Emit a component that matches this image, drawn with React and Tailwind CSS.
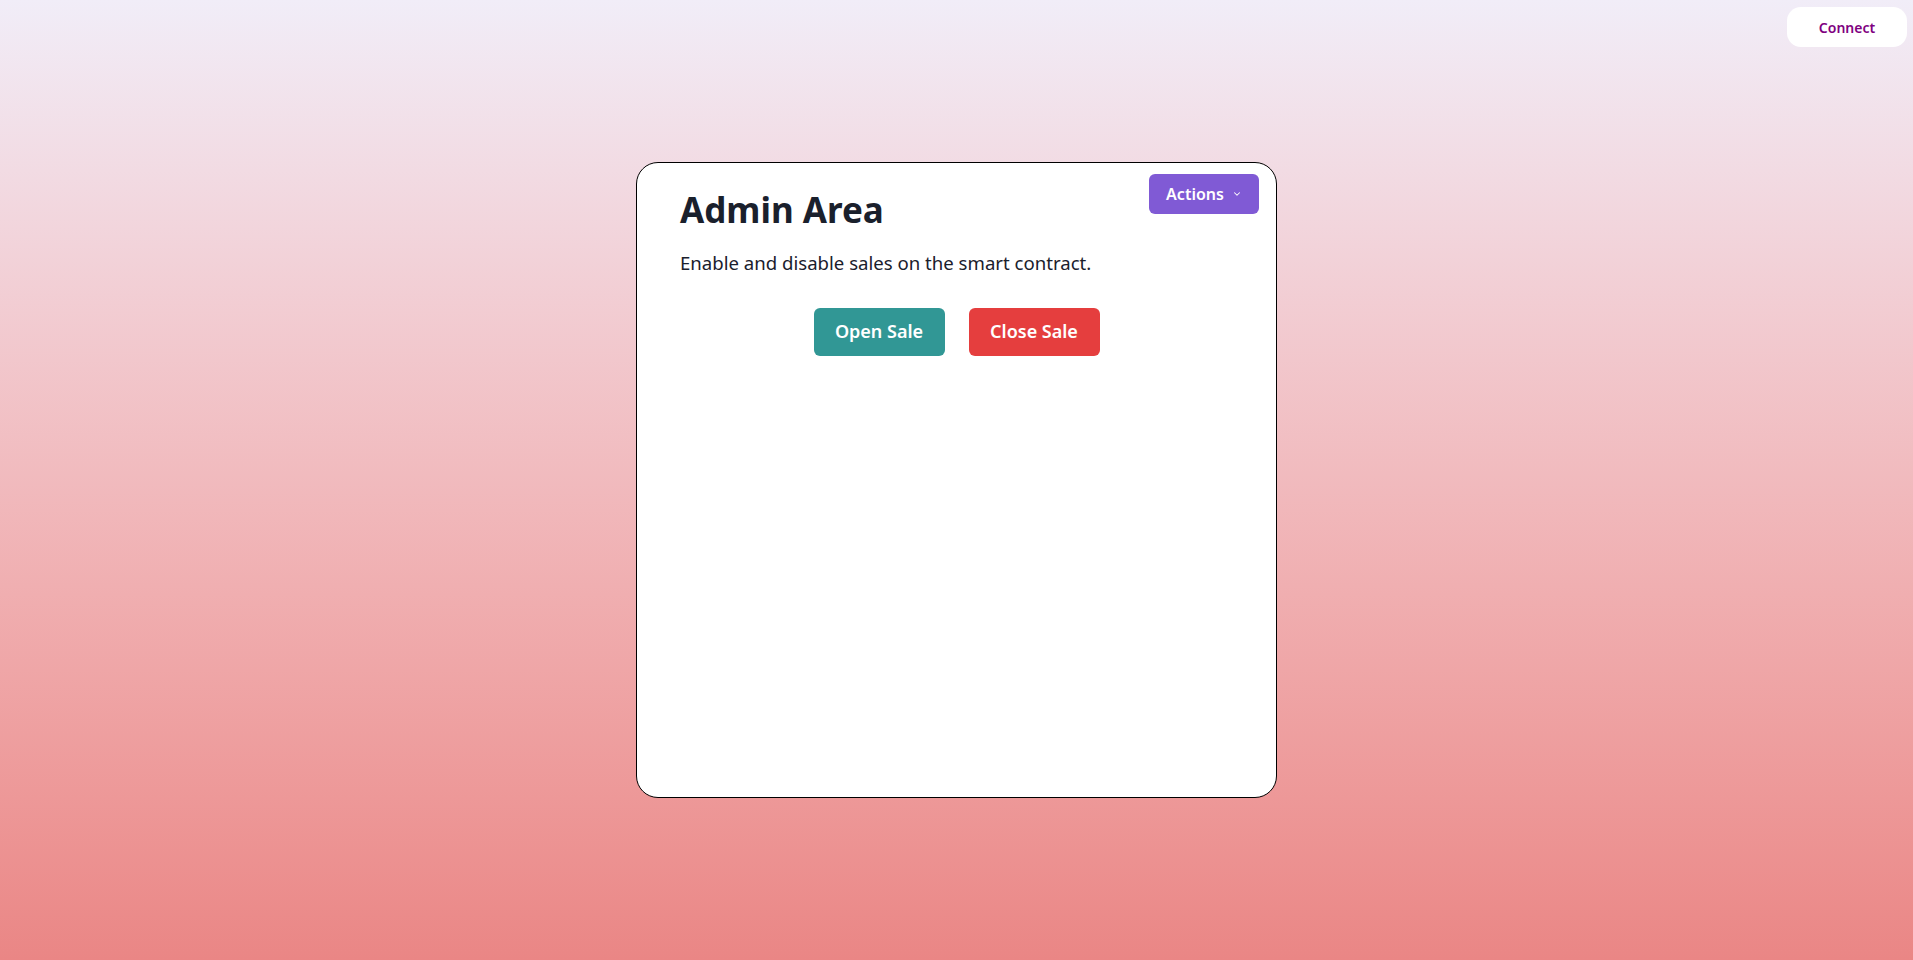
import React from "react";

const App = () => {
  return (
    <div
      className="relative w-full h-[960px] bg-gradient-to-b from-[#f1edf8] to-[#ea8685] flex items-center justify-center"
      style={{ fontFamily: '"Noto Sans", "Open Sans", sans-serif' }}
    >
      {/* Top right connect */}
      <button className="absolute top-[7px] right-[6px] w-[120px] h-[40px] bg-white rounded-[14px] text-[14px] font-semibold text-[#800080]">
        Connect
      </button>

      {/* Admin card */}
      <div className="relative w-[641px] h-[636px] bg-white border border-black rounded-[22px] px-[43px] pt-[26px]">
        <button className="absolute top-[11px] right-[17px] w-[110px] h-[40px] bg-[#805ad5] rounded-md text-white font-semibold text-[16px] flex items-center justify-center gap-2">
          Actions
          <svg width="10" height="10" viewBox="0 0 24 24" fill="none" stroke="white" strokeWidth="2.5" strokeLinecap="round" strokeLinejoin="round">
            <path d="M6 9l6 6 6-6" />
          </svg>
        </button>

        <h1 className="text-[35px] font-bold text-[#1a202c] leading-[1.2]">Admin Area</h1>
        <p className="mt-[18px] text-[18.6px] text-[#1a202c]">
          Enable and disable sales on the smart contract.
        </p>

        <div className="mt-[31px] flex justify-center gap-6">
          <button className="w-[131px] h-[48px] bg-[#319795] rounded-md text-white font-semibold text-[18px]">
            Open Sale
          </button>
          <button className="w-[131px] h-[48px] bg-[#e53e3e] rounded-md text-white font-semibold text-[18px]">
            Close Sale
          </button>
        </div>
      </div>
    </div>
  );
};

export default App;
